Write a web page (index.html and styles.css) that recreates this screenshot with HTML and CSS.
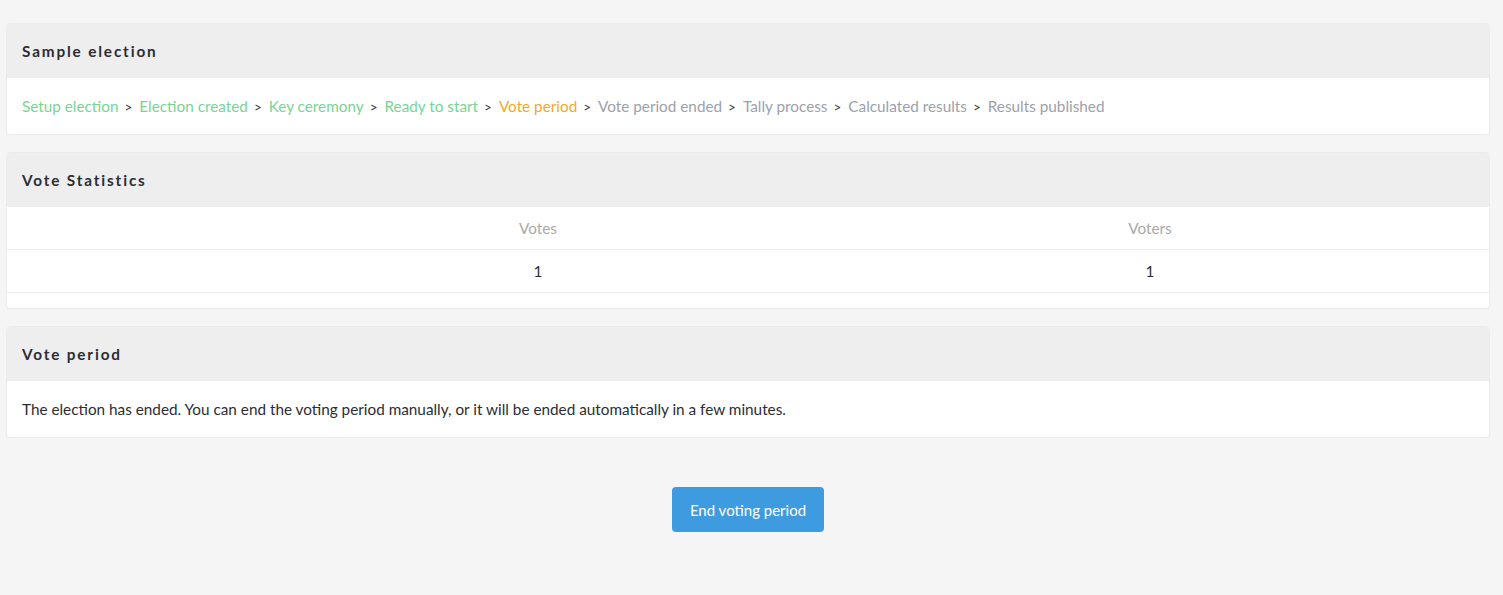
FILE: index.html
```html
<!DOCTYPE html>
<html lang="en">
<head>
  <meta charset="UTF-8" />
  <title>Sample election</title>
  <link rel="stylesheet" href="styles.css">
</head>
<body>
  <div class="page">
    <div class="card">
      <div class="card-header">Sample election</div>
      <div class="card-body steps">
        <span class="done">Setup election</span><span class="sep">&gt;</span>
        <span class="done">Election created</span><span class="sep">&gt;</span>
        <span class="done">Key ceremony</span><span class="sep">&gt;</span>
        <span class="done">Ready to start</span><span class="sep">&gt;</span>
        <span class="current">Vote period</span><span class="sep">&gt;</span>
        <span class="todo">Vote period ended</span><span class="sep">&gt;</span>
        <span class="todo">Tally process</span><span class="sep">&gt;</span>
        <span class="todo">Calculated results</span><span class="sep">&gt;</span>
        <span class="todo">Results published</span>
      </div>
    </div>

    <div class="card">
      <div class="card-header">Vote Statistics</div>
      <div class="stats">
        <div class="stats-row head">
          <div></div>
          <div>Votes</div>
          <div>Voters</div>
        </div>
        <div class="stats-row">
          <div></div>
          <div>1</div>
          <div>1</div>
        </div>
      </div>
    </div>

    <div class="card">
      <div class="card-header">Vote period</div>
      <div class="card-body">
        The election has ended. You can end the voting period manually, or it will be ended automatically in a few minutes.
      </div>
    </div>

    <div class="actions">
      <button type="button">End voting period</button>
    </div>
  </div>
</body>
</html>
```

FILE: styles.css
```css
body {
  margin: 0;
  font-family: "Lato", "Noto Sans", sans-serif;
  font-size: 15.3px;
  color: #2b2d33;
  background: #f5f5f5;
}
.page {
  padding: 23px 13px 0 6px;
}
.card {
  background: white;
  border: 1px solid #ebebeb;
  border-radius: 4px;
  margin-bottom: 17px;
  overflow: hidden;
}
.card-header {
  background: #eeeeee;
  height: 54px;
  display: flex;
  align-items: center;
  padding: 0 15px;
  font-weight: bold;
  letter-spacing: 1.85px;
  color: #2b2d33;
}
.card-body {
  padding: 19px 15px 18px;
  line-height: 19px;
}
.steps {
  display: flex;
  flex-wrap: wrap;
  align-items: baseline;
  padding-bottom: 17px;
}
.steps span {
  white-space: nowrap;
}
.steps .sep {
  color: #333;
  margin: 0 7px 0 6px;
  font-size: 13.5px;
}
.done {
  color: #79d494;
}
.current {
  color: #f7a823;
}
.todo {
  color: #9ca1ab;
}
.stats {
  padding-bottom: 15px;
}
.stats-row {
  display: grid;
  grid-template-columns: 258px 546px 1fr;
  height: 42px;
  align-items: center;
  text-align: center;
  border-bottom: 1px solid #eeeeee;
}
.stats-row.head {
  color: #a9a9a9;
}
.actions {
  display: flex;
  justify-content: center;
  padding-top: 32px;
}
button {
  background: #3f9be0;
  color: white;
  border: none;
  border-radius: 4px;
  width: 152px;
  height: 45px;
  font-family: inherit;
  font-size: 15px;
}
```
